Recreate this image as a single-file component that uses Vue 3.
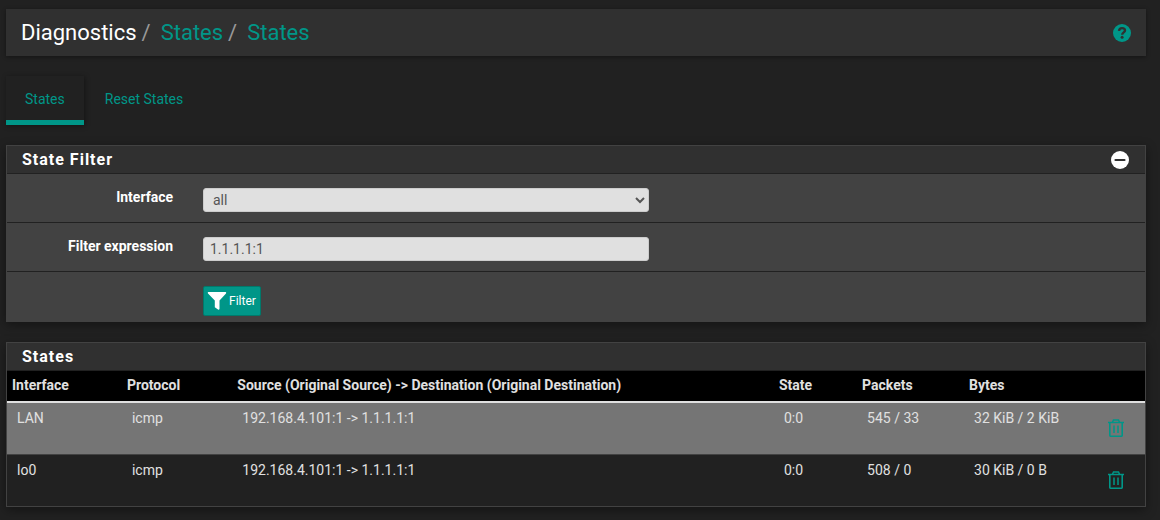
<script setup>
import { ref } from 'vue'

const iface = ref('all')
const expression = ref('1.1.1.1:1')
const open = ref(true)

const columns = [
  { key: 'iface', label: 'Interface' },
  { key: 'protocol', label: 'Protocol' },
  { key: 'route', label: 'Source (Original Source) -> Destination (Original Destination)' },
  { key: 'state', label: 'State' },
  { key: 'packets', label: 'Packets' },
  { key: 'bytes', label: 'Bytes' },
]

const states = ref([
  { iface: 'LAN', protocol: 'icmp', route: '192.168.4.101:1 -> 1.1.1.1:1', state: '0:0', packets: '545 / 33', bytes: '32 KiB / 2 KiB' },
  { iface: 'lo0', protocol: 'icmp', route: '192.168.4.101:1 -> 1.1.1.1:1', state: '0:0', packets: '508 / 0', bytes: '30 KiB / 0 B' },
])

function remove(index) {
  states.value.splice(index, 1)
}
</script>

<template>
  <div class="page">
    <header class="header">
      <nav class="crumbs" aria-label="Breadcrumb">
        <span>Diagnostics</span>
        <span class="slash">/</span>
        <a href="#states">States</a>
        <span class="slash">/</span>
        <a href="#states">States</a>
      </nav>
      <a class="help" href="#help" aria-label="Help">
        <svg viewBox="0 0 18 18" width="18" height="18" aria-hidden="true">
          <circle cx="9" cy="9" r="9" fill="#009688" />
          <path d="M6 6.9C6.2 4.9 7.4 4.1 9 4.1c1.800 0 3 1 3 2.500C12 8.500 9.200 8.300 9.200 10.700" fill="none" stroke="#303030" stroke-width="2.400" />
          <circle cx="9.100" cy="13.300" r="1.500" fill="#303030" />
        </svg>
      </a>
    </header>

    <nav class="tabs" aria-label="Views">
      <a class="tab active" href="#states" aria-current="page">States</a>
      <a class="tab" href="#reset">Reset States</a>
    </nav>

    <form class="panel filter" @submit.prevent>
      <div class="title">
        <h2>State Filter</h2>
        <button class="toggle" type="button" aria-label="Toggle filter" :aria-expanded="open" @click="open = !open">
          <svg viewBox="0 0 18 18" width="18" height="18" aria-hidden="true">
            <circle cx="9" cy="9" r="9" fill="#fff" />
            <path d="M4.500 9h9" stroke="#303030" stroke-width="2.200" stroke-linecap="round" />
          </svg>
        </button>
      </div>
      <template v-if="open">
        <div class="row">
          <label for="iface">Interface</label>
          <select id="iface" v-model="iface" class="field">
            <option>all</option>
            <option>LAN</option>
            <option>lo0</option>
          </select>
        </div>
        <div class="row">
          <label for="expression">Filter expression</label>
          <input id="expression" v-model="expression" class="field" type="text" />
        </div>
        <div class="row last">
          <button class="apply" type="submit">
            <svg viewBox="0 0 20 18" width="20" height="18" aria-hidden="true">
              <path d="M1.300 0h17.400q.9.600.3 1.500L12.500 8.500v8.200q-.2 1.500-1.500.9L7.800 15.300V8.500L1 1.500Q.4.500 1.300 0z" fill="#fff" />
            </svg>
            <span>Filter</span>
          </button>
        </div>
      </template>
    </form>

    <section class="panel">
      <div class="title">
        <h2>States</h2>
      </div>
      <table>
        <colgroup>
          <col v-for="c in columns" :key="c.key" :class="'col-' + c.key" />
          <col />
        </colgroup>
        <thead>
          <tr>
            <th v-for="c in columns" :key="c.key" scope="col">{{ c.label }}</th>
            <th></th>
          </tr>
        </thead>
        <tbody>
          <tr v-for="(s, i) in states" :key="s.iface">
            <td v-for="c in columns" :key="c.key">{{ s[c.key] }}</td>
            <td class="actions">
              <button type="button" :aria-label="'Remove state on ' + s.iface" @click="remove(i)">
                <svg viewBox="0 0 16 18" width="16" height="18" fill="none" stroke="#009688" aria-hidden="true">
                  <path d="M0 3.500h16" stroke-width="1.500" />
                  <path d="M4.500 3.200L5.500.9h5l1 2.300" stroke-width="1.500" />
                  <path d="M1.800 3.500v13.100q0 .600.600.600h11.200q.600 0 .600-.600V3.500" stroke-width="1.600" />
                  <path d="M6 6.500v7.500M10 6.500v7.500" stroke-width="1.500" />
                </svg>
              </button>
            </td>
          </tr>
        </tbody>
      </table>
    </section>
  </div>
</template>

<style>
body {
  background: #212121;
}
</style>

<style scoped>
.page {
  box-sizing: border-box;
  padding: 9px 14px 12px 6px;
  font: 14px/20px Roboto, sans-serif;
  color: #fff;
}
a {
  color: #009688;
  text-decoration: none;
}
button {
  font: inherit;
  cursor: pointer;
}
svg {
  display: block;
}
.header {
  display: flex;
  align-items: center;
  justify-content: space-between;
  padding: 8px 15px;
  background: #303030;
  box-shadow: 0 1px 4px rgba(0, 0, 0, 0.4);
}
.crumbs {
  display: flex;
  font-size: 22px;
  line-height: 31px;
}
.crumbs a {
  padding-left: 10px;
}
.slash {
  padding-left: 5px;
  color: #999;
}
.tabs {
  display: flex;
  margin: 20px 0;
}
.tab {
  padding: 13px 19px 11px;
  border-bottom: 5px solid transparent;
}
.tab + .tab {
  padding-left: 21px;
}
.active {
  border-color: #009688;
  box-shadow: 1px 1px 5px rgba(0, 0, 0, 0.4);
}
.panel {
  margin-bottom: 20px;
  border: 1px solid #424242;
  background: #212121;
  box-shadow: 0 3px 10px rgba(0, 0, 0, 0.4);
}
.title {
  display: flex;
  align-items: center;
  justify-content: space-between;
  padding: 4px 16px 3px 15px;
  background: #303030;
  border-bottom: 1px solid #212121;
}
h2 {
  margin: 0;
  font-size: 16px;
  line-height: 20px;
  font-weight: 700;
  letter-spacing: 1px;
}
.toggle {
  padding: 0;
  border: 0;
  background: none;
}
.row {
  display: grid;
  grid-template-columns: 166px minmax(0, 446px);
  column-gap: 30px;
  padding: 14px 0 10px;
  background: #424242;
  border-bottom: 1px solid #212121;
}
.row label {
  font-weight: 700;
  text-align: right;
  line-height: 19px;
}
.field {
  box-sizing: border-box;
  width: 100%;
  height: 24px;
  border: 1px solid #ccc;
  border-radius: 3px;
  background-color: #e0e0e0;
  color: #555;
  font: inherit;
}
input.field {
  padding: 0 6px;
}
select.field {
  padding: 0 5px;
}
.last {
  padding: 14px 0 5px;
  border-bottom: 0;
}
.apply {
  grid-column: 2;
  justify-self: start;
  display: flex;
  align-items: center;
  gap: 2px;
  padding: 4px 4px 4px 3px;
  border: 1px solid #00796b;
  border-radius: 2px;
  background: #009688;
  color: #fff;
  font-size: 12px;
}
table {
  width: 100%;
  table-layout: fixed;
  border-collapse: collapse;
  color: #e0e0e0;
}
.col-iface { width: 10.1%; }
.col-protocol { width: 9.7%; }
.col-route { width: 47.6%; }
.col-state { width: 7.3%; }
.col-packets { width: 9.4%; }
.col-bytes { width: 8%; }
th {
  padding: 4px 5px 6px;
  background: #000;
  border-bottom: 2px solid #e0e0e0;
  text-align: left;
}
td {
  padding: 5px 10px 26px;
  vertical-align: top;
  white-space: nowrap;
}
tbody tr:nth-child(odd) {
  background: #757575;
}
tbody tr + tr {
  border-top: 1px solid #424242;
}
.actions {
  padding: 16px 21px 0 0;
}
.actions button {
  display: block;
  margin-left: auto;
  padding: 0;
  border: 0;
  background: none;
}
</style>
